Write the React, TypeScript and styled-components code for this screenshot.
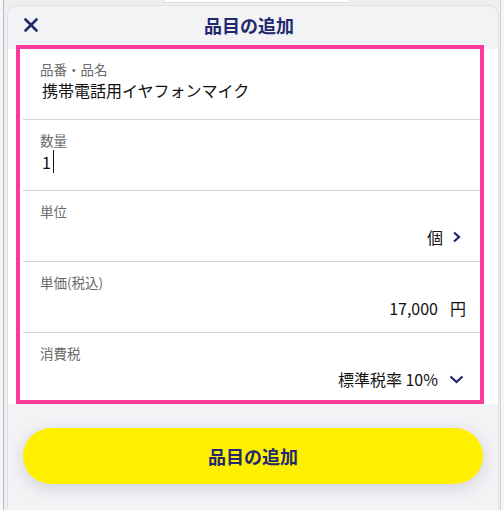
import React from 'react'
import styled, { createGlobalStyle } from 'styled-components'

const NAVY = '#232a6b'

const GlobalStyle = createGlobalStyle`
	html, body {
		margin: 0;
		padding: 0;
		width: 504px;
		height: 510px;
		overflow: hidden;
		background: #f6f6f8;
	}
	body {
		font-family: "Noto Sans CJK JP", "Noto Sans", sans-serif;
	}
	#root {
		height: 100%;
	}
`

const Screen = styled.div`
	box-sizing: border-box;
	margin-left: 3px;
	width: 498px;
	height: 510px;
	border-left: 1px solid #b8b8bd;
	border-right: 1px solid #d2d2d6;
	background: #efeff2;
	padding: 0 1px 0 3px;
	display: flex;
	flex-direction: column;
`

const BackdropTab = styled.div`
	box-sizing: border-box;
	margin-left: 156px;
	width: 188px;
	height: 3px;
	background: #fff;
	border: 1px solid #dedee2;
	border-top: none;
	border-radius: 0 0 6px 6px;
`

const Panel = styled.div`
	box-sizing: border-box;
	margin-top: 2px;
	flex: 1;
	display: flex;
	flex-direction: column;
	background: #f3f3f6;
	border: 1px solid #dfdfe4;
	border-bottom: none;
	border-radius: 10px 10px 0 0;
`

const Header = styled.header`
	box-sizing: border-box;
	height: 43px;
	display: grid;
	grid-template-columns: 40px 1fr 40px;
	align-items: center;
	padding: 0 16px 6px 8px;
`

const CloseButton = styled.button`
	all: unset;
	margin-left: 8px;
	width: 14px;
	height: 14px;
	display: flex;
	cursor: pointer;
`

const Title = styled.h1`
	margin: 0;
	text-align: center;
	font-size: 18px;
	font-weight: 700;
	line-height: 24px;
	color: #1f2a6d;
`

const Body = styled.div`
	background: #fff;
	padding: 0 0 0 8px;
`

const Form = styled.div`
	box-sizing: border-box;
	width: 468px;
	margin-top: -4px;
	border: 4px solid #fb3a9a;
	background: #fff;
`

const Row = styled.div<{ $last?: boolean }>`
	box-sizing: border-box;
	height: ${p => (p.$last ? 67 : 71)}px;
	margin-left: 3px;
	padding: 10px 14px 0 17px;
	border-bottom: ${p => (p.$last ? 'none' : '1px solid #d3d3d6')};
`

const Label = styled.div`
	font-size: 13.5px;
	line-height: 20px;
	color: #6a6a6a;
`

const TextValue = styled.div`
	display: flex;
	align-items: center;
	padding-left: 2px;
	font-size: 16px;
	line-height: 22px;
	color: #111;
`

const Caret = styled.span`
	display: inline-block;
	width: 1px;
	height: 23px;
	margin-left: 2px;
	background: #111;
`

const PickValue = styled.div<{ $gap?: number }>`
	display: flex;
	justify-content: flex-end;
	align-items: center;
	gap: ${p => p.$gap ?? 3}px;
	margin-top: 5px;
	font-size: 16px;
	line-height: 22px;
	color: #111;
`

const IconBox = styled.span`
	width: 20px;
	height: 22px;
	display: flex;
	align-items: center;
	justify-content: center;
`

const Footer = styled.div`
	padding: 24px 14px 0 15px;
`

const SubmitButton = styled.button`
	all: unset;
	box-sizing: border-box;
	width: 460px;
	height: 56px;
	border-radius: 28px;
	background: #fff000;
	box-shadow: 0 4px 16px rgba(70, 70, 100, 0.2);
	display: flex;
	align-items: center;
	justify-content: center;
	font-size: 18px;
	font-weight: 700;
	color: ${NAVY};
	cursor: pointer;
`

const CloseIcon = () => (
	<svg width='14' height='14' viewBox='0 0 14 14'>
		<path d='M1.5 1.5 L12.5 12.5 M12.5 1.5 L1.5 12.5' stroke={NAVY} strokeWidth='2.6' strokeLinecap='round' fill='none' />
	</svg>
)

const ChevronRight = () => (
	<svg width='9' height='12' viewBox='0 0 9 12'>
		<polyline points='2,1.5 7,6 2,10.5' stroke={NAVY} strokeWidth='2.3' fill='none' strokeLinejoin='miter' />
	</svg>
)

const ChevronDown = () => (
	<svg width='15' height='9' viewBox='0 0 15 9'>
		<polyline points='1.5,1.5 7.5,7 13.5,1.5' stroke={NAVY} strokeWidth='2.3' fill='none' strokeLinejoin='miter' />
	</svg>
)

export default function App() {
	return (
		<>
			<GlobalStyle />
			<Screen>
				<BackdropTab />
				<Panel>
					<Header>
						<CloseButton aria-label='閉じる'>
							<CloseIcon />
						</CloseButton>
						<Title>品目の追加</Title>
						<span />
					</Header>
					<Body>
						<Form>
							<Row>
								<Label>品番・品名</Label>
								<TextValue>携帯電話用イヤフォンマイク</TextValue>
							</Row>
							<Row>
								<Label>数量</Label>
								<TextValue>
									1<Caret />
								</TextValue>
							</Row>
							<Row>
								<Label>単位</Label>
								<PickValue $gap={3}>
									個
									<IconBox>
										<ChevronRight />
									</IconBox>
								</PickValue>
							</Row>
							<Row>
								<Label>単価(税込)</Label>
								<PickValue $gap={12}>
									<span>17,000</span>
									<span>円</span>
								</PickValue>
							</Row>
							<Row $last>
								<Label>消費税</Label>
								<PickValue $gap={8}>
									標準税率 10%
									<IconBox>
										<ChevronDown />
									</IconBox>
								</PickValue>
							</Row>
						</Form>
					</Body>
					<Footer>
						<SubmitButton>品目の追加</SubmitButton>
					</Footer>
				</Panel>
			</Screen>
		</>
	)
}
